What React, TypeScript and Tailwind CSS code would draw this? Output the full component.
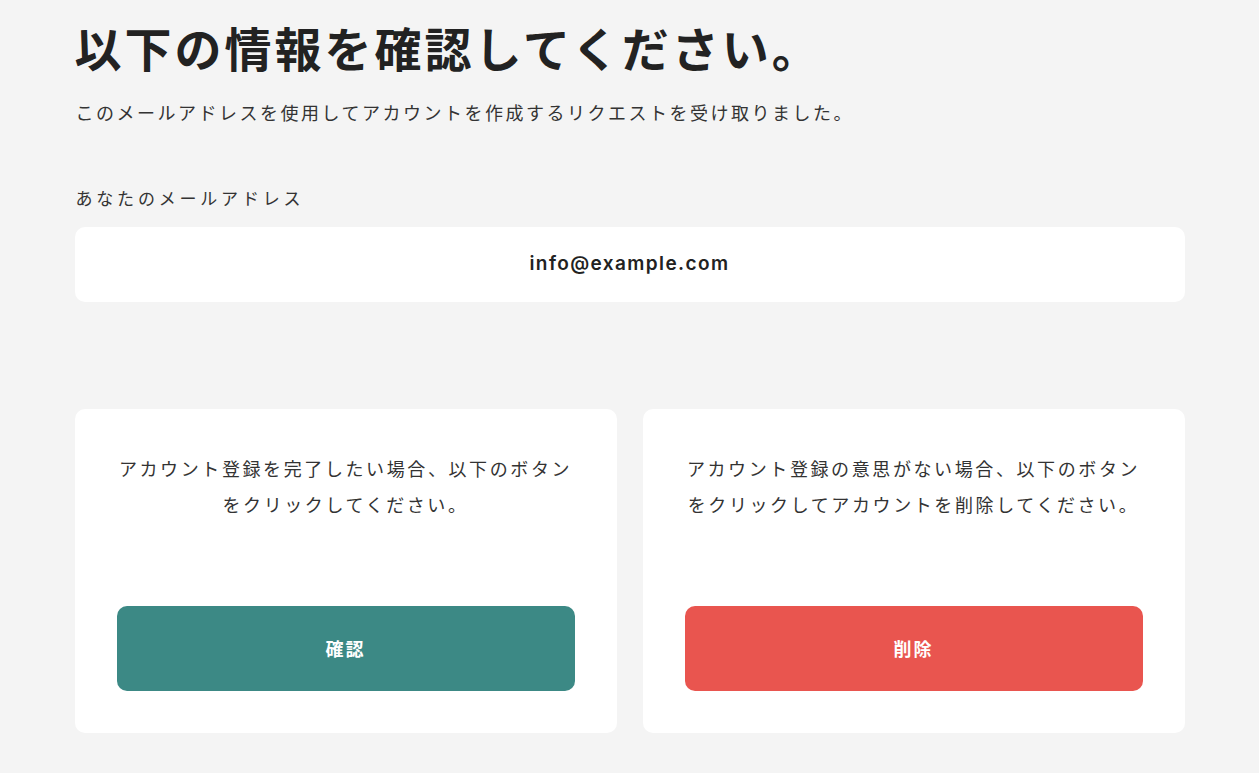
import React from "react";

const jp = '"Noto Sans CJK JP", "Noto Sans", sans-serif';

export default function App() {
  return (
    <div
      className="min-h-[773px] w-full bg-[#f4f4f4] text-[#222222]"
      style={{ fontFamily: jp }}
    >
      <div className="mx-auto w-[1110px] pt-[19px] pb-[40px]">
        <h1 className="text-[47px] font-bold leading-[56px] tracking-[3px] text-[#222222]">
          以下の情報を確認してください。
        </h1>
        <p className="mt-[22px] text-[18px] leading-[30px] tracking-[2.5px] text-[#333333] pl-[1px]">
          このメールアドレスを使用してアカウントを作成するリクエストを受け取りました。
        </p>
        <div className="mt-[57px] pl-[1px] text-[17px] leading-[28px] tracking-[3.8px] text-[#333333]">
          あなたのメールアドレス
        </div>
        <div className="mt-[15px] flex h-[75px] items-center justify-center rounded-[10px] bg-white">
          <span
            className="text-[19px] font-semibold tracking-[1.4px] text-[#222222]"
            style={{ fontFamily: '"Inter", "Noto Sans", sans-serif' }}
          >
            info@example.com
          </span>
        </div>
        <div className="mt-[107px] grid grid-cols-2 gap-[26px]">
          <Card
            text="アカウント登録を完了したい場合、以下のボタンをクリックしてください。"
            label="確認"
            color="bg-[#3c8985]"
          />
          <Card
            text="アカウント登録の意思がない場合、以下のボタンをクリックしてアカウントを削除してください。"
            label="削除"
            color="bg-[#e9554f]"
          />
        </div>
      </div>
    </div>
  );
}

function Card({ text, label, color }: { text: string; label: string; color: string }) {
  return (
    <div className="flex h-[324px] flex-col rounded-[10px] bg-white px-[42px] pt-[41px] pb-[42px]">
      <p className="h-[72px] text-center text-[18px] leading-[36px] tracking-[2.6px] text-[#333333]">
        {text}
      </p>
      <button
        className={`mt-auto flex h-[85px] w-full items-center justify-center rounded-[10px] ${color} text-[18px] font-bold tracking-[2px] text-white`}
      >
        {label}
      </button>
    </div>
  );
}
